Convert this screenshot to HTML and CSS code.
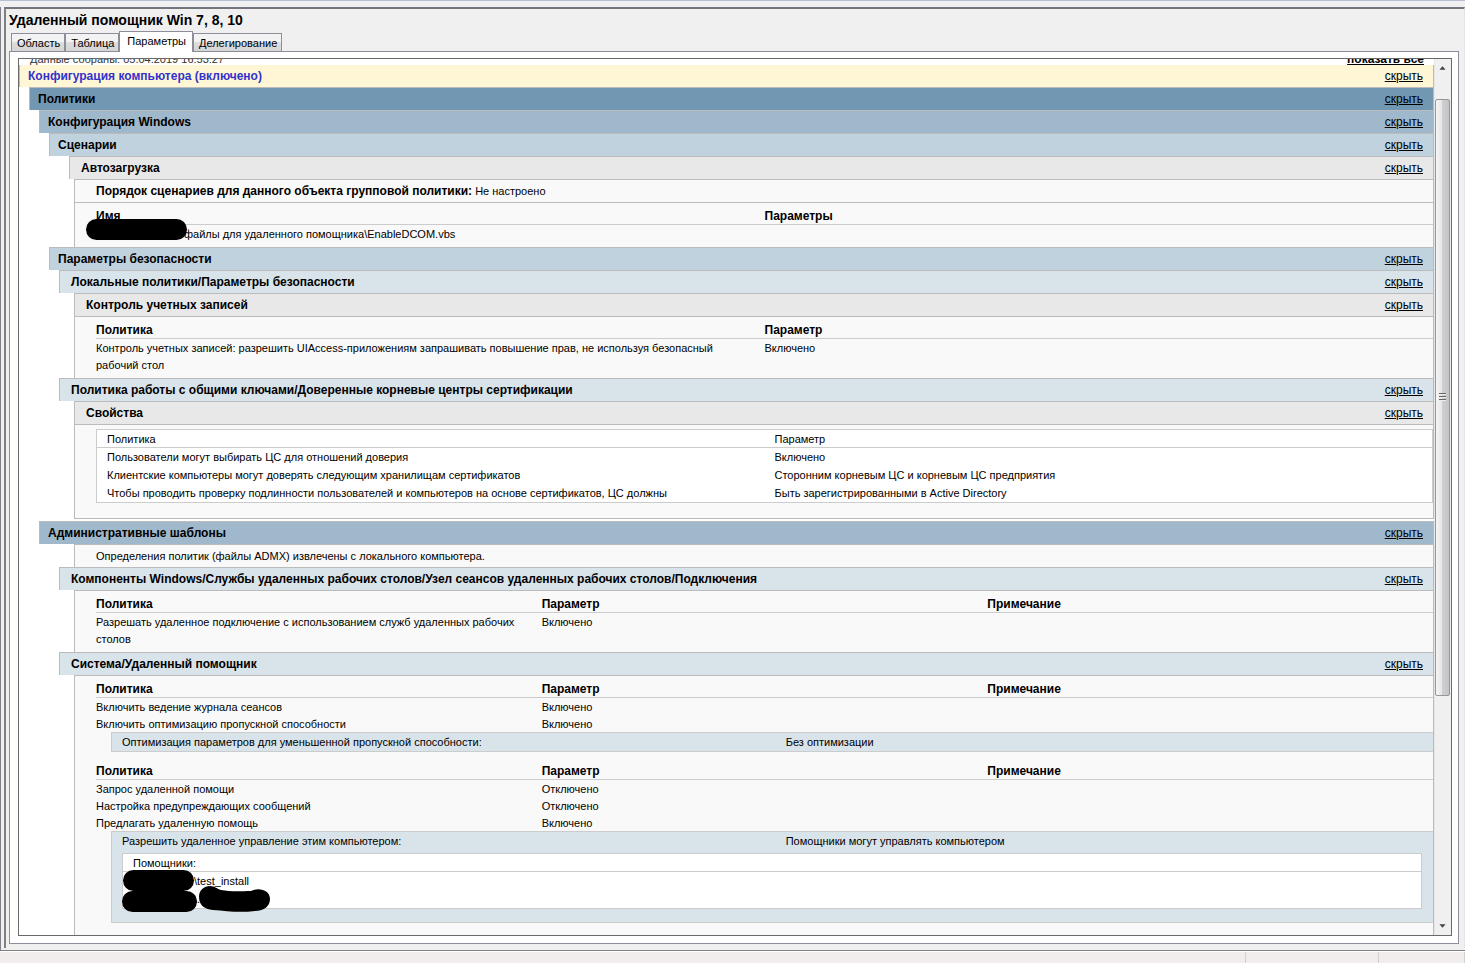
FILE: index.html
```
<!DOCTYPE html>
<html lang="ru">
<head>
<meta charset="utf-8">
<title>Удаленный помощник Win 7, 8, 10</title>
<link rel="stylesheet" href="styles.css">
</head>
<body>
<div class="window">
  <main class="pane">
    <h1 class="title">Удаленный помощник Win 7, 8, 10</h1>
    <div class="tabs" role="tablist">
      <button class="tab" role="tab">Область</button>
      <button class="tab" role="tab">Таблица</button>
      <button class="tab tab-active" role="tab" aria-selected="true">Параметры</button>
      <button class="tab" role="tab">Делегирование</button>
    </div>
    <div class="page">
      <div class="viewer">
        <div class="report">
          <div class="report-top"><span>Данные собраны: 05.04.2019 16:53:27</span><a class="show-all" href="#">показать все</a></div>

          <div class="bar bar-root"><span>Конфигурация компьютера (включено)</span><a href="#">скрыть</a></div>
          <div class="bar bar-1"><span>Политики</span><a href="#">скрыть</a></div>
          <div class="bar bar-2"><span>Конфигурация Windows</span><a href="#">скрыть</a></div>
          <div class="bar bar-3"><span>Сценарии</span><a href="#">скрыть</a></div>
          <div class="bar bar-5"><span>Автозагрузка</span><a href="#">скрыть</a></div>
          <div class="box box-line"><p><b>Порядок сценариев для данного объекта групповой политики:</b> Не настроено</p></div>
          <div class="box">
            <table class="grid cols-2">
              <thead><tr><th>Имя</th><th>Параметры</th></tr></thead>
              <tbody><tr><td><span class="hidden-name"><i class="blot blot-path"></i></span>файлы для удаленного помощника\EnableDCOM.vbs</td><td></td></tr></tbody>
            </table>
          </div>

          <div class="bar bar-3"><span>Параметры безопасности</span><a href="#">скрыть</a></div>
          <div class="bar bar-4"><span>Локальные политики/Параметры безопасности</span><a href="#">скрыть</a></div>
          <div class="bar bar-6"><span>Контроль учетных записей</span><a href="#">скрыть</a></div>
          <div class="box">
            <table class="grid cols-2">
              <thead><tr><th>Политика</th><th>Параметр</th></tr></thead>
              <tbody><tr><td>Контроль учетных записей: разрешить UIAccess-приложениям запрашивать повышение прав, не используя безопасный рабочий стол</td><td>Включено</td></tr></tbody>
            </table>
          </div>

          <div class="bar bar-4"><span>Политика работы с общими ключами/Доверенные корневые центры сертификации</span><a href="#">скрыть</a></div>
          <div class="bar bar-6"><span>Свойства</span><a href="#">скрыть</a></div>
          <div class="box box-last">
            <table class="sheet">
              <thead><tr><th>Политика</th><th>Параметр</th></tr></thead>
              <tbody>
                <tr><td>Пользователи могут выбирать ЦС для отношений доверия</td><td>Включено</td></tr>
                <tr><td>Клиентские компьютеры могут доверять следующим хранилищам сертификатов</td><td>Сторонним корневым ЦС и корневым ЦС предприятия</td></tr>
                <tr><td>Чтобы проводить проверку подлинности пользователей и компьютеров на основе сертификатов, ЦС должны</td><td>Быть зарегистрированными в Active Directory</td></tr>
              </tbody>
            </table>
          </div>

          <div class="bar bar-2"><span>Административные шаблоны</span><a href="#">скрыть</a></div>
          <div class="box box-line"><p>Определения политик (файлы ADMX) извлечены с локального компьютера.</p></div>
          <div class="bar bar-4"><span>Компоненты Windows/Службы удаленных рабочих столов/Узел сеансов удаленных рабочих столов/Подключения</span><a href="#">скрыть</a></div>
          <div class="box">
            <table class="grid cols-3">
              <thead><tr><th>Политика</th><th>Параметр</th><th>Примечание</th></tr></thead>
              <tbody><tr><td>Разрешать удаленное подключение с использованием служб удаленных рабочих столов</td><td>Включено</td><td></td></tr></tbody>
            </table>
          </div>

          <div class="bar bar-4"><span>Система/Удаленный помощник</span><a href="#">скрыть</a></div>
          <div class="box box-open">
            <table class="grid cols-3">
              <thead><tr><th>Политика</th><th>Параметр</th><th>Примечание</th></tr></thead>
              <tbody>
                <tr><td>Включить ведение журнала сеансов</td><td>Включено</td><td></td></tr>
                <tr><td>Включить оптимизацию пропускной способности</td><td>Включено</td><td></td></tr>
              </tbody>
            </table>
            <div class="detail">
              <div class="pair"><span>Оптимизация параметров для уменьшенной пропускной способности:</span><span>Без оптимизации</span></div>
            </div>
            <table class="grid cols-3 grid-next">
              <thead><tr><th>Политика</th><th>Параметр</th><th>Примечание</th></tr></thead>
              <tbody>
                <tr><td>Запрос удаленной помощи</td><td>Отключено</td><td></td></tr>
                <tr><td>Настройка предупреждающих сообщений</td><td>Отключено</td><td></td></tr>
                <tr><td>Предлагать удаленную помощь</td><td>Включено</td><td></td></tr>
              </tbody>
            </table>
            <div class="detail detail-tall">
              <div class="pair"><span>Разрешить удаленное управление этим компьютером:</span><span>Помощники могут управлять компьютером</span></div>
              <table class="sheet sheet-inner">
                <thead><tr><th>Помощники:</th></tr></thead>
                <tbody>
                  <tr><td><span class="hidden-user"><i class="blot blot-user"></i></span>\test_install</td></tr>
                  <tr><td><span class="hidden-user"><i class="blot blot-domain"></i></span>\.<svg class="scrawl" width="72" height="27" viewBox="0 0 72 27" aria-hidden="true"><path d="M11 1C16 1 18 4 22 5C32 7 44 6 52 6C60 2 71 5 71 14C71 22 64 26 56 26C40 28 28 26 14 25C5 24 0 20 0 12C0 5 5 1 11 1Z"/></svg></td></tr>
                </tbody>
              </table>
            </div>
          </div>
        </div>
        <div class="scroll" aria-hidden="true">
          <svg class="arrow" viewBox="0 0 17 17"><path d="M5 11 L8.500 7 L12 11Z" fill="#444"/></svg>
          <div class="gap-top"></div>
          <div class="thumb"><i></i><i></i><i></i></div>
          <div class="gap-bottom"></div>
          <svg class="arrow" viewBox="0 0 17 17"><path d="M5 6 L8.500 10 L12 6Z" fill="#444"/></svg>
        </div>
      </div>
    </div>
  </main>
</div>
<footer class="status"><span></span><span></span><span></span></footer>
</body>
</html>
```
FILE: styles.css
```
* { box-sizing: border-box; }
body {
  margin: 0;
  height: 100vh;
  display: flex;
  flex-direction: column;
  overflow: hidden;
  background: #f0f0f0;
  border-top: 1px solid #b8bed4;
  color: #000;
  font: 11px/17px "Liberation Sans", Arial, sans-serif;
}
.window {
  flex: 1;
  min-height: 0;
  display: flex;
  margin-top: 6px;
  padding: 0 0 2px 3px;
  border-left: 1px solid #808088;
  border-bottom: 1px solid #808080;
}
.pane {
  flex: 1;
  min-width: 0;
  display: flex;
  flex-direction: column;
  padding: 1px 5px 4px 3px;
  border-top: 2px solid #74747a;
  border-left: 2px solid #808080;
  border-right: 1px solid #e3e3e3;
}
.title { margin: 0; font-size: 14px; line-height: 20px; font-weight: bold; }
.tabs { display: flex; align-items: flex-end; padding-left: 2px; height: 21px; }
.tab {
  height: 18px;
  margin: 0;
  padding: 1px 4px 0 5px;
  border: 1px solid #8c8e99;
  border-bottom: 0;
  background: linear-gradient(#f3f3f3 0 50%, #dedede 50%, #d4d4d4);
  font: 11px/16px "Liberation Sans", Arial, sans-serif;
  color: #000;
}
.tab-active {
  position: relative;
  height: 21px;
  margin-bottom: -1px;
  padding: 0 6px 2px 7px;
  background: #fff;
}
.page {
  flex: 1;
  min-height: 0;
  display: flex;
  padding: 6px 6px 7px 8px;
  background: #fff;
  border: 1px solid #8c8e99;
}
.viewer {
  flex: 1;
  min-width: 0;
  display: flex;
  border: 1px solid #696969;
  overflow: hidden;
}
.report { flex: 1; min-width: 0; overflow: hidden; }

.report-top {
  display: flex;
  justify-content: space-between;
  align-items: flex-end;
  height: 6px;
  overflow: hidden;
  padding: 0 10px 0 11px;
  line-height: 12px;
  color: #333;
}
.show-all { font-size: 12px; font-weight: bold; color: #000; }

.bar {
  display: flex;
  justify-content: space-between;
  height: 23px;
  padding: 0 10px 0 8px;
  border: 1px solid #bbb;
  border-bottom: 0;
  font-size: 12px;
  line-height: 22px;
  font-weight: bold;
}
.bar a { font-weight: normal; color: #000; }
.bar-root { height: 22px; border-top: 0; background: #fef6d4; color: #33c; }
.bar-1 { margin-left: 10px; background: #7197b3; }
.bar-2 { margin-left: 20px; background: #a0b8cc; }
.bar-3 { margin-left: 30px; background: #c0d2de; }
.bar-4 { margin-left: 40px; padding-left: 11px; background: #d9e3ea; }
.bar-5 { margin-left: 50px; padding-left: 11px; background: #e8e8e8; }
.bar-6 { margin-left: 55px; padding-left: 11px; background: #e8e8e8; }

.box {
  margin-left: 55px;
  padding: 0 0 5px 21px;
  background: #f9f9f9;
  border: 1px solid #bbb;
  border-bottom: 0;
}
.box-line { padding-bottom: 0; }
.box-line p { margin: 0; line-height: 22px; }
.box-line b { font-size: 12px; }
.box-last { margin-bottom: 2px; padding: 4px 0 15px 21px; border-bottom: 1px solid #bbb; }
.box-open { padding-bottom: 40px; }

table { width: 100%; border-collapse: separate; border-spacing: 0; table-layout: fixed; }
th, td { padding: 0; text-align: left; vertical-align: top; }
.grid { margin-bottom: -1px; }
.grid th { padding-top: 5px; border-bottom: 1px solid #ccc; font-size: 12px; height: 22px; line-height: 16px; }
.grid td { padding-right: 20px; }
.grid tbody tr:first-child td { padding-top: 1px; }
.grid-next { margin-top: 6px; }

.sheet { background: #fff; border: 1px solid #ccc; }
.sheet th { padding-top: 1px; border-bottom: 1px solid #ccc; font-weight: normal; line-height: 16px; }
.sheet th, .sheet td { padding-left: 10px; }
.sheet td { line-height: 18px; }

.detail { position: relative; margin-left: 15px; background: #d9e3ea; border: 1px solid #ccc; border-right: 0; }
.detail-tall { padding: 0 11px 13px 10px; }
.detail-tall .pair { margin: 0 -11px 3px -10px; }
.pair { display: grid; grid-template-columns: 51fr 49fr; line-height: 18px; }
.pair span:first-child { padding-left: 10px; }

.hidden-name, .hidden-user { position: relative; display: inline-block; height: 11px; }
.hidden-name { width: 88px; }
.hidden-user { width: 61px; }
.blot { position: absolute; height: 21px; border-radius: 11px; background: #000; }
.blot-path { left: -10px; top: -8px; width: 101px; }
.blot-user { left: -10px; top: -4px; width: 71px; }
.blot-domain { left: -11px; top: -1px; width: 75px; }
.sheet-inner td { position: relative; height: 18px; }
.scrawl { position: absolute; left: 76px; top: -5px; }

.scroll { flex: none; width: 17px; display: flex; flex-direction: column; background: #f0f0f0; border-left: 1px solid #e6e6e6; }
.arrow { flex: none; width: 15px; height: 17px; }
.gap-top { flex: 23; }
.gap-bottom { flex: 223; }
.thumb {
  flex: 596;
  display: flex;
  flex-direction: column;
  align-items: center;
  justify-content: center;
  gap: 1px;
  margin-right: 1px;
  border: 1px solid #979797;
  border-radius: 2px;
  background: linear-gradient(90deg, #f5f5f5, #e6e6e6 45%, #cfcfd2 50%, #c4c4c8);
}
.thumb i { width: 7px; height: 2px; background: #666; border-bottom: 1px solid #eee; }

.status { flex: none; display: flex; justify-content: flex-end; height: 12px; border-top: 1px solid #fff; background: #f0edec; }
.status span { border-left: 1px solid #d4d0d0; width: 86px; }
.status span:first-child { width: 133px; }
.status span:last-child { width: 1px; }
```
